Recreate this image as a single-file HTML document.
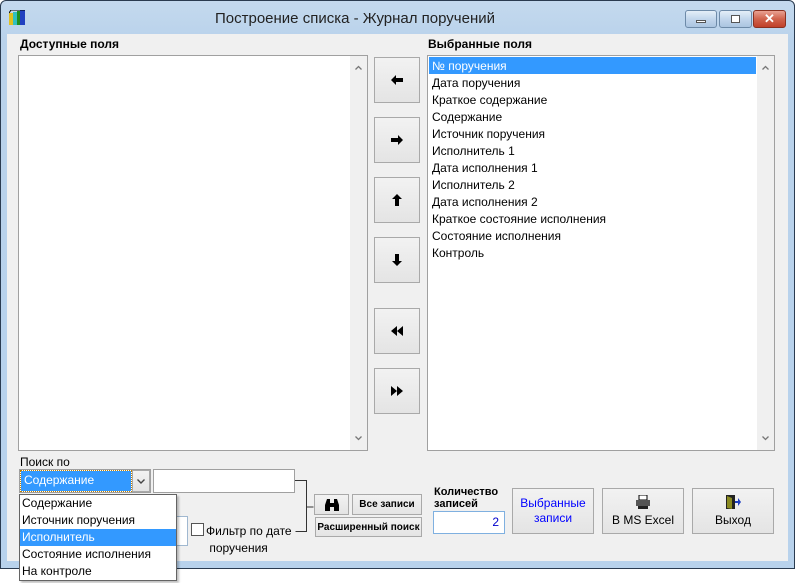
<!DOCTYPE html>
<html><head><meta charset="utf-8"><style>
*{box-sizing:border-box;margin:0;padding:0}
body{width:798px;height:583px;background:#fff;position:relative;overflow:hidden;font-family:"Liberation Sans",Arial,sans-serif;font-size:12px;color:#000}
.a{position:absolute}
.win{left:0;top:0;width:795px;height:569px;background:linear-gradient(#c4d9ee,#b9d2eb 40px,#b8d2ec);border:1px solid #2a3b50;border-radius:6px 6px 0 0}
.client{left:7px;top:34px;width:781px;height:527px;background:#f0f0f0}
.list{background:#fff;border:1px solid #a0a0a0}
.sb{background:#f0f0f0}
.btn{background:linear-gradient(#f2f2f2,#e4e4e4);border:1px solid #a9a9a9;display:flex;align-items:center;justify-content:center;text-align:center}
.lbl{font-weight:bold;font-size:12px}
.it{position:absolute;left:4px;font-size:12px;line-height:17px;white-space:nowrap}
.cap{top:10px;height:18px;border:1px solid #6d8aa8;border-radius:3px;background:linear-gradient(#e4eef8,#c2d6ec 50%,#aac4e0)}
.chev{position:absolute;right:5px}
</style></head><body>
<div class="a win"></div>
<svg class="a" style="left:9px;top:10px" width="17" height="16"><rect x="0" y="3" width="4" height="12" fill="#e0c020"/><rect x="4" y="2" width="4" height="13" fill="#30c0c0"/><rect x="8" y="1" width="3" height="14" fill="#209020"/><rect x="11" y="0" width="5" height="15" fill="#2040c0"/><path d="M0 3l2-3h14" stroke="#000" fill="none"/></svg>
<div class="a" style="left:0;width:710px;top:10px;text-align:center;font-size:15px;color:#222">Построение списка - Журнал поручений</div>
<div class="a cap" style="left:685px;width:32px"><div class="a" style="left:10px;top:9px;width:10px;height:3px;background:#fff;border:1px solid #555"></div></div>
<div class="a cap" style="left:719px;width:33px"><div class="a" style="left:11px;top:4px;width:9px;height:8px;border:1px solid #555;background:#fff"></div></div>
<div class="a cap" style="left:753px;width:33px;background:linear-gradient(#e9a293,#d0634d 50%,#c0402a);border-color:#8a3020;color:#fff;font-weight:bold;font-size:13px;text-align:center;line-height:16px">✕</div>
<div class="a client"></div>

<div class="a lbl" style="left:20px;top:37px">Доступные поля</div>
<div class="a lbl" style="left:428px;top:37px">Выбранные поля</div>

<div class="a list" style="left:18px;top:55px;width:350px;height:396px"><div class="a sb" style="right:0;top:0;width:17px;height:394px"></div>
<svg class="chev" style="top:9px" width="7" height="5"><path d="M0.5 4.5l3-3 3 3" stroke="#777" fill="none" stroke-width="1.3"/></svg>
<svg class="chev" style="bottom:9px" width="7" height="5"><path d="M0.5 0.5l3 3 3-3" stroke="#777" fill="none" stroke-width="1.3"/></svg></div>
<div class="a list" style="left:427px;top:55px;width:348px;height:396px"><div class="a sb" style="right:0;top:0;width:17px;height:394px"></div>
<svg class="chev" style="top:9px" width="7" height="5"><path d="M0.5 4.5l3-3 3 3" stroke="#777" fill="none" stroke-width="1.3"/></svg>
<svg class="chev" style="bottom:9px" width="7" height="5"><path d="M0.5 0.5l3 3 3-3" stroke="#777" fill="none" stroke-width="1.3"/></svg>
<div class="a" style="left:1px;top:1px;width:327px;height:17px;background:#3399ff"></div>
<div class="it" style="top:2px;color:#fff">№ поручения</div>
<div class="it" style="top:19px">Дата поручения</div>
<div class="it" style="top:36px">Краткое содержание</div>
<div class="it" style="top:53px">Содержание</div>
<div class="it" style="top:70px">Источник поручения</div>
<div class="it" style="top:87px">Исполнитель 1</div>
<div class="it" style="top:104px">Дата исполнения 1</div>
<div class="it" style="top:121px">Исполнитель 2</div>
<div class="it" style="top:138px">Дата исполнения 2</div>
<div class="it" style="top:155px">Краткое состояние исполнения</div>
<div class="it" style="top:172px">Состояние исполнения</div>
<div class="it" style="top:189px">Контроль</div>
</div>

<div class="a btn" style="left:374px;top:57px;width:46px;height:46px"><svg width="12" height="10"><path d="M0 5l5-5v3h7v4h-7v3z"/></svg></div>
<div class="a btn" style="left:374px;top:117px;width:46px;height:46px"><svg width="12" height="10"><path d="M12 5l-5-5v3h-7v4h7v3z"/></svg></div>
<div class="a btn" style="left:374px;top:177px;width:46px;height:46px"><svg width="10" height="12"><path d="M5 0l-5 5h3v7h4v-7h3z"/></svg></div>
<div class="a btn" style="left:374px;top:237px;width:46px;height:46px"><svg width="10" height="12"><path d="M5 12l-5-5h3v-7h4v7h3z"/></svg></div>
<div class="a btn" style="left:374px;top:308px;width:46px;height:46px"><svg width="12" height="10"><path d="M0 5l6-5v10zM6 5l6-5v10z"/></svg></div>
<div class="a btn" style="left:374px;top:368px;width:46px;height:46px"><svg width="12" height="10"><path d="M12 5l-6-5v10zM6 5l-6-5v10z"/></svg></div>

<div class="a" style="left:20px;top:455px">Поиск по</div>
<div class="a" style="left:19px;top:469px;width:132px;height:24px;border:1px solid #a0a0a0;background:#fff"></div>
<div class="a" style="left:21px;top:471px;width:110px;height:20px;background:#3399ff;outline:1px dotted #c08000;color:#fff;padding:2px 3px">Содержание</div>
<div class="a btn" style="left:132px;top:470px;width:18px;height:22px"><svg width="8" height="5"><path d="M0.5 0.5l3.5 3.5 3.5-3.5" stroke="#444" fill="none" stroke-width="1.4"/></svg></div>
<div class="a" style="left:153px;top:469px;width:142px;height:24px;border:1px solid #a0a0a0;background:#fff"></div>
<div class="a" style="left:175px;top:516px;width:13px;height:30px;border:1px solid #a0b8d0;background:#fff"></div>
<svg class="a" style="left:294px;top:478px" width="20" height="60"><path d="M1 2.5h11.5v51h-11M12.5 29h7" stroke="#333" fill="none"/></svg>
<div class="a" style="left:191px;top:523px;width:13px;height:13px;border:1px solid #555;background:#fff"></div>
<div class="a" style="left:206px;top:523px;line-height:17px">Фильтр по дате<br>&nbsp;поручения</div>

<div class="a" style="left:19px;top:494px;width:158px;height:87px;border:1px solid #646464;background:#fff;box-shadow:2px 2px 2px rgba(0,0,0,.25)">
<div class="a" style="left:0;top:34px;width:156px;height:17px;background:#3399ff"></div>
<div class="it" style="left:2px;top:0">Содержание</div>
<div class="it" style="left:2px;top:17px">Источник поручения</div>
<div class="it" style="left:2px;top:34px;color:#fff">Исполнитель</div>
<div class="it" style="left:2px;top:51px">Состояние исполнения</div>
<div class="it" style="left:2px;top:68px">На контроле</div>
</div>

<div class="a btn" style="left:314px;top:494px;width:35px;height:21px"><svg width="16" height="12"><path d="M1 12v-6l2-6h3v12zM15 12v-6l-2-6h-3v12zM6 4h4v4h-4z" fill="#000"/></svg></div>
<div class="a btn" style="left:352px;top:494px;width:70px;height:21px;font-size:10px;font-weight:bold">Все записи</div>
<div class="a btn" style="left:315px;top:517px;width:107px;height:20px;font-size:10px;font-weight:bold">Расширенный поиск</div>

<div class="a" style="left:434px;top:486px;font-size:11px;font-weight:bold;line-height:12px">Количество<br>записей</div>
<div class="a" style="left:433px;top:511px;width:72px;height:23px;border:1px solid #7fb0e0;background:#fff;color:#00c;text-align:right;padding:3px 5px;font-size:12px">2</div>
<div class="a btn" style="left:512px;top:488px;width:82px;height:46px;color:#00f;line-height:15px">Выбранные<br>записи</div>
<div class="a btn" style="left:602px;top:488px;width:82px;height:46px;flex-direction:column"><svg width="16" height="14"><path d="M4 0h8v5h-8z" fill="#fff" stroke="#000"/><path d="M1 5h14v6h-14z" fill="#555"/><path d="M3 11h10v3h-10z" fill="#222"/></svg><div style="margin-top:4px">В MS Excel</div></div>
<div class="a btn" style="left:692px;top:488px;width:82px;height:46px;flex-direction:column"><svg width="16" height="14"><rect x="1" y="0" width="9" height="14" fill="#222"/><path d="M2 1l5 2v11l-5-1z" fill="#8a8a20"/><path d="M10 6h3v-3l3 4-3 4v-3h-3z" fill="#2040c0"/></svg><div style="margin-top:4px">Выход</div></div>
</body></html>
